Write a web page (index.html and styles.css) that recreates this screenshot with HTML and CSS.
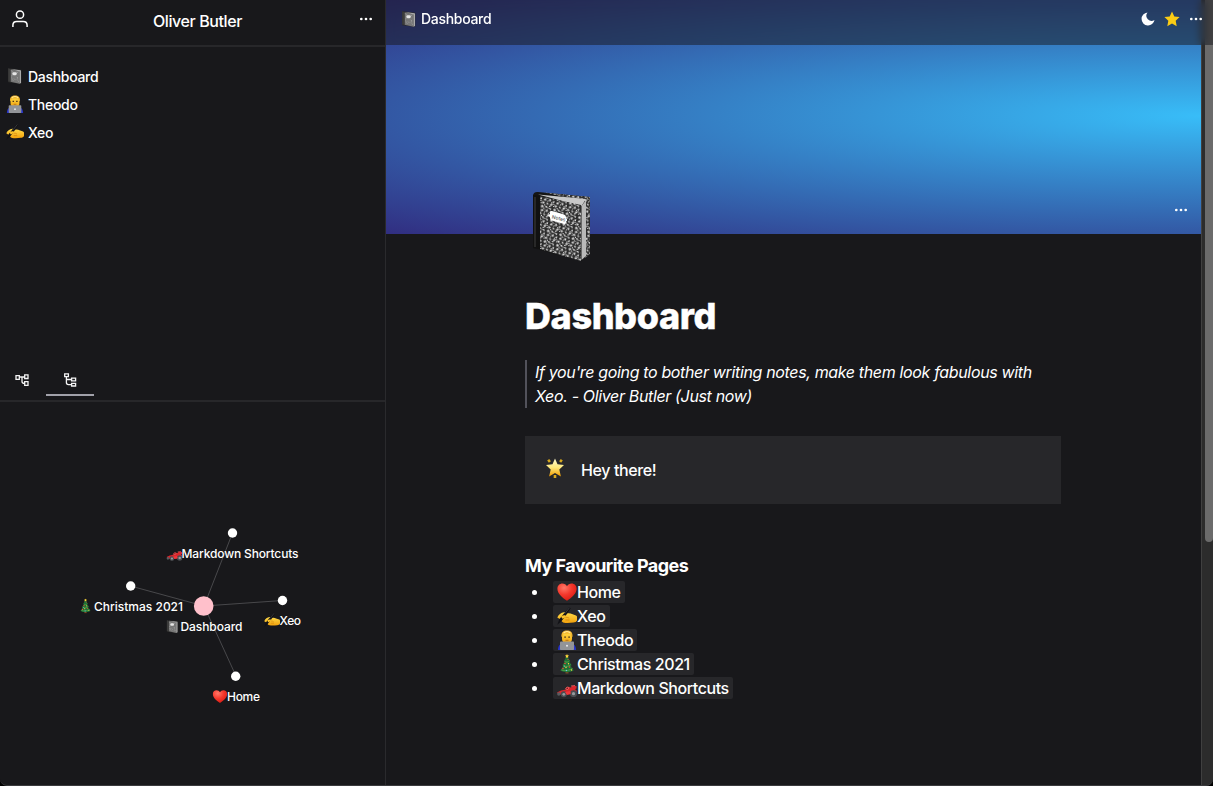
FILE: index.html
```html
<!DOCTYPE html>
<html lang="en">
<head>
<meta charset="utf-8">
<title>Dashboard</title>
<link rel="stylesheet" href="styles.css">
</head>
<body>
<svg class="defs" aria-hidden="true">
  <defs>
    <linearGradient id="gold" x1="0" y1="0" x2="0" y2="1"><stop offset="0" stop-color="#ffdc4a"/><stop offset="1" stop-color="#f2a10c"/></linearGradient>
    <linearGradient id="shine" x1="0" y1="0" x2="0" y2="1"><stop offset="0" stop-color="#fffbd0"/><stop offset=".5" stop-color="#ffe97a"/><stop offset="1" stop-color="#f09c00"/></linearGradient>
    <radialGradient id="red" cx=".35" cy=".25" r=".8"><stop offset="0" stop-color="#ff7868"/><stop offset=".5" stop-color="#f4382c"/><stop offset="1" stop-color="#d81912"/></radialGradient>
    <pattern id="marble" width="13" height="11" patternUnits="userSpaceOnUse" patternTransform="rotate(17)">
      <rect width="13" height="11" fill="#2c2c2c"/>
      <path d="M0 1l2-1 1 2-2 1zM4 0h2l1 2-2-.5zM9 1l2 .5v1.500l-2-1zM2 4l2 1-1 1.500-2-.5zM6 4l1.500-1 1 2-1.500 1zM10 5l2-1v2l-1 .5zM0 8l2-.5 1 1.500-2 1zM4.500 7.500l2 .5v2l-1.500-1zM8.500 8l2-1 .5 2-2 1zM12 9h1v1h-1z" fill="#dcdcdc"/>
      <path d="M3 2.500h1v1H3zM7.500 1h1v1h-1zM5 5.500h1v1H5zM9 6h.8v1H9zM11.500 7h1v1h-1zM3 10h1v1H3zM8 10l1.500.2v.8H8zM4 3.500l1-.5.5 1z" fill="#f2f2f2"/>
    </pattern>
    <symbol id="notebook" viewBox="0 0 20 20">
      <path d="M2.500 1.500L17 3v15l-1.500.5L2.500 17z" fill="#2b2b2b"/>
      <path d="M5 2.800L15 4.500v14L5 16.300z" fill="#777"/>
      <path d="M5 2.300l11.500 1.400L15 5z" fill="#aaa"/>
      <path d="M15 4.500l1.700-.8v14l-1.700.8z" fill="#aaa"/>
      <path d="M2.500 1.500l2.500 1v13.800L2.500 16z" fill="#3c3c3c"/>
      <path d="M6 4l1 1M12 5.500l1 1M6 12l1 1M9 13l1 1M12 11l1 1M7 14l1 1M13 15l1 1M6 10l1-.5M12 13.500l1-.5" stroke="#b5b5b5" stroke-width=".8"/>
      <rect x="7" y="5.800" width="5" height="3.300" rx="1.500" fill="#e6e6e6"/>
    </symbol>
    <symbol id="coder" viewBox="0 0 20 20">
      <path d="M1 20c0-5 3-7 6-7h6c3 0 6 2 6 7z" fill="#2834c8"/>
      <path d="M8 11h4v4H8z" fill="#e39b12"/>
      <rect x="5" y="2" width="10" height="11.500" rx="4.500" fill="url(#gold)"/>
      <path d="M4.500 7C4 2 6.500 .5 10 .5s6 1.500 5.500 6.500C14 6.500 14 4 13 3.800H7C6 4 6 6.500 4.500 7z" fill="#f3b62c"/>
      <path d="M6.500 3.200c2-2 5-2 7 0" fill="none" stroke="#ffe89a" stroke-width="1.200"/>
      <path d="M7.300 6.500h1.600v1.200H7.300zM11.300 6.500h1.600v1.200h-1.600z" fill="#4b3418"/>
      <path d="M8.500 10.300h3" stroke="#a75b12" stroke-width=".8"/>
      <rect x="3" y="11.500" width="14" height="8.500" rx=".8" fill="#929498"/>
      <circle cx="10" cy="15.700" r="1" fill="#eee"/>
    </symbol>
    <symbol id="writing" viewBox="0 0 20 20">
      <path d="M.300 11.500C1.500 8.500 4 6.800 7 6.300c1.500-.2 2.200.5 2.700 1.200 2-.7 4-.2 5.300.5l4 1.500c1 .5 1.300 1.500 1.300 3.500s-1.500 3.300-3.800 3.500c-3 .5-7 .7-9.500.2-1-.2-2-.8-2.500-1.700l-1-1.500z" fill="url(#gold)"/>
      <path d="M8.500 11.500c1.500-.4 3 0 3.700 1M8.500 14h4" fill="none" stroke="#cf7b08" stroke-width=".7"/>
      <path d="M12.300 1L13.700 2.200 9 9.300 4.600 15 .3 18.700l2-5.500L7.300 7z" fill="#111115"/>
      <path d="M12.600 1.600L7.800 7.700" stroke="#55555a" stroke-width=".6"/>
      <path d="M4 10.500c1.500-1 3.200-1.500 4.500-1 .8.500.3 1.700-.7 2L5.300 12.800z" fill="#ffc52b"/>
    </symbol>
    <symbol id="heart" viewBox="0 0 20 20">
      <path d="M10 18.800C5 15.500.4 11.500.4 6.800.4 3.600 2.600 1.500 5.400 1.500c2 0 3.600 1 4.600 2.700 1-1.700 2.600-2.700 4.600-2.700 2.800 0 5 2.100 5 5.300 0 4.700-4.600 8.700-9.600 12z" fill="url(#red)"/>
    </symbol>
    <symbol id="tree" viewBox="0 0 20 20">
      <path d="M8.500 16h3v3.500h-3z" fill="#7b4a22"/>
      <path d="M10 1.500L13 7l-1 .3 2.700 4-1.200.5 3.200 4.700c-4.200 2.200-9.200 2.200-13.400 0l3.200-4.700-1.200-.5 2.700-4-1-.3z" fill="#1d7136"/>
      <path d="M7.500 7.500c2 1 3.500.8 5-.5M6 11.800c3 1.200 6 .5 7.500-1M4.500 16c4 1 8.500.5 11-1.500" fill="none" stroke="#59a848" stroke-width=".9"/>
      <path d="M10 0l.6 1.300 1.400.2-1 1 .2 1.500-1.200-.7-1.200.7.2-1.500-1-1 1.400-.2z" fill="#ffd83a"/>
      <g fill="#f04638"><circle cx="8" cy="9.500" r=".8"/><circle cx="12.500" cy="13" r=".8"/><circle cx="6" cy="14.500" r=".8"/><circle cx="11" cy="5.500" r=".6"/></g>
      <g fill="#ffd447"><circle cx="11.500" cy="9.800" r=".7"/><circle cx="9" cy="13.500" r=".7"/><circle cx="14.500" cy="16" r=".7"/></g>
      <g fill="#6fc3ec"><circle cx="9.500" cy="16.500" r=".7"/><circle cx="7.500" cy="12" r=".6"/></g>
    </symbol>
    <symbol id="car" viewBox="0 0 20 20">
      <path d="M0 14.500l4-2 5-1 2-2.500 3 .5 1-1.500h4.500v2.500L18 11l2 2-2 3.500H2z" fill="#d8262c"/>
      <path d="M8.500 11l1.500-2 2 .5-1 2zM14 8l4-.5" stroke="#fa6464" stroke-width=".8" fill="#791116"/>
      <circle cx="6.800" cy="16.300" r="3" fill="#4a4c50"/><circle cx="6.800" cy="16.300" r="1.400" fill="#96999d"/>
      <circle cx="16.500" cy="15.700" r="3.400" fill="#4a4c50"/><circle cx="16.500" cy="15.700" r="1.600" fill="#96999d"/>
      <circle cx="1.800" cy="16" r="1.700" fill="#5a5c60"/>
      <path d="M8 14l5-1 1 2.500-4 1.500z" fill="#f0363a"/>
    </symbol>
    <symbol id="dots" viewBox="0 0 14 4"><circle cx="2.300" cy="2" r="1.350"/><circle cx="7" cy="2" r="1.350"/><circle cx="11.700" cy="2" r="1.350"/></symbol>
  </defs>
</svg>

<div class="app">
  <aside class="sidebar">
    <header class="account">
      <svg class="user" viewBox="0 0 18 18"><circle cx="9" cy="4.700" r="3.600"/><path d="M1.900 17v-1.800c0-2.200 1.700-3.700 3.900-3.700h6.400c2.200 0 3.900 1.500 3.900 3.700V17"/></svg>
      <span class="name">Oliver Butler</span>
      <svg class="dots"><use href="#dots"/></svg>
    </header>
    <nav class="pages">
      <a class="page"><svg class="emoji"><use href="#notebook"/></svg><span>Dashboard</span></a>
      <a class="page"><svg class="emoji"><use href="#coder"/></svg><span>Theodo</span></a>
      <a class="page"><svg class="emoji"><use href="#writing"/></svg><span>Xeo</span></a>
    </nav>
    <div class="tabs">
      <div class="tab"><svg class="tree-icon" viewBox="0 0 14 14"><path d="M1 2.600h3.300v3.800H1zM9.700 1.800H13v3.700H9.700zM9.700 8.700H13v3.600H9.700zM4.300 4h5.400M7 4v4.500q0 2 2.700 2"/></svg></div>
      <div class="tab active"><svg class="tree-icon" viewBox="0 0 14 14"><path d="M1.700.9h3.700v2.700H1.700zM8.600 5.200h4v2.700h-4zM8.600 10.300h4V13h-4zM3.400 3.600v6q0 2 2 2h3.200M3.400 6.500h5.200"/></svg></div>
    </div>
    <svg class="graph" viewBox="0 402 385 384">
      <g class="edges"><path d="M204 606L232.500 533M204 606L130.500 586M204 606L282.500 600.500M204 606L236 676"/></g>
      <circle cx="203.700" cy="606" r="9.800" class="hub"/>
      <g class="nodes"><circle cx="232.500" cy="533" r="4.700"/><circle cx="130.700" cy="586" r="4.700"/><circle cx="282.500" cy="600.500" r="4.700"/><circle cx="235.700" cy="676.200" r="4.700"/></g>
      <use href="#car" x="166.500" y="545.500" width="16" height="16"/>
      <text x="181.500" y="558" textLength="117">Markdown Shortcuts</text>
      <use href="#tree" x="78" y="598.500" width="15" height="15"/>
      <text x="94" y="611" textLength="89">Christmas 2021</text>
      <use href="#notebook" x="165" y="619" width="15" height="15"/>
      <text x="180.500" y="631" textLength="62">Dashboard</text>
      <use href="#writing" x="264" y="612" width="16" height="16"/>
      <text x="279.500" y="625" textLength="21.500">Xeo</text>
      <use href="#heart" x="212.500" y="689" width="15" height="15"/>
      <text x="227" y="701" textLength="33">Home</text>
    </svg>
  </aside>

  <main class="main">
    <div class="scroller">
      <div class="doc">
        <div class="cover"><svg class="dots"><use href="#dots"/></svg></div>
        <article class="content">
          <svg class="book" viewBox="0 0 60 72">
            <path d="M1 5Q2 1.500 6 2l52 5v57l-9 7L1 58z" fill="#151515"/>
            <path d="M12 2.500l46 4.500v57l-5 4V11z" fill="url(#marble)"/>
            <path d="M6 4.500l48 4.500-4.500 7z" fill="#c9c9c9"/>
            <path d="M49.500 16l4.500-6v56l-4.500 4z" fill="#b9b9b9"/>
            <path d="M8 6l41 9v56L8 59z" fill="url(#marble)"/>
            <path d="M1 5l7 1v53l-7-1z" fill="#111"/><path d="M3 7v50" stroke="#555" stroke-width=".7"/>
            <path d="M18 22q0-1.500 2-1l12 3.500q2 .5 2 2.500v1.500l1 .5v2l-1 .5v1q0 2-2 1.500l-12-3.500q-2-.5-2-2.500V27l-1.500-.7v-2l1.500.3z" fill="#fff"/>
            <text x="19.500" y="28.500" font-size="5" fill="#555" transform="rotate(13 19.500 28.500)">Notes</text>
          </svg>
          <h1>Dashboard</h1>
          <blockquote>If you're going to bother writing notes, make them look fabulous with<br>Xeo. - Oliver Butler (Just now)</blockquote>
          <div class="callout">
            <svg class="star-emoji" viewBox="0 0 20 20"><path d="M3.200 1.800l1.700 2.200M16.800 1.800l-1.700 2.200M10 17v3" stroke="#d8a91d" stroke-width="2.600"/><path d="M10 .5l2.500 5.800 6.500.7-4.700 4.400 1.600 7L10 15l-5.900 3.400 1.600-7L1 7l6.500-.7z" fill="url(#shine)"/></svg>
            <span>Hey there!</span>
          </div>
          <h2>My Favourite Pages</h2>
          <ul>
            <li><a class="chip"><svg class="em"><use href="#heart"/></svg>Home</a></li>
            <li><a class="chip"><svg class="em"><use href="#writing"/></svg>Xeo</a></li>
            <li><a class="chip"><svg class="em"><use href="#coder"/></svg>Theodo</a></li>
            <li><a class="chip"><svg class="em"><use href="#tree"/></svg>Christmas 2021</a></li>
            <li><a class="chip"><svg class="em"><use href="#car"/></svg>Markdown Shortcuts</a></li>
          </ul>
        </article>
      </div>
      <div class="track"><div class="thumb"></div></div>
    </div>
    <header class="topbar">
      <svg class="emoji"><use href="#notebook"/></svg><span class="title">Dashboard</span>
      <svg class="moon" viewBox="0 0 14 14"><path d="M6.500.5A6.500 6.500 0 1 0 13.500 8 5.200 5.200 0 0 1 6.500.5z"/></svg>
      <svg class="star" viewBox="0 0 16 16"><path d="M8 .5l2.300 4.900 5.300.7-3.900 3.700 1 5.400L8 12.600l-4.700 2.600 1-5.400L.4 6.100l5.300-.7z"/></svg>
      <svg class="dots"><use href="#dots"/></svg>
    </header>
  </main>
</div>
</body>
</html>
```
FILE: styles.css
```css
* { box-sizing: border-box; }
body { margin: 0; background: #000; color: #fff; font-family: Inter, "Liberation Sans", sans-serif; font-weight: 450; overflow: hidden; }
svg { display: block; flex: none; }
.defs { position: absolute; width: 0; height: 0; }
.app { position: relative; display: flex; width: 1213px; height: 786px; background: #18181b; border-radius: 0 0 7px 7px; overflow: hidden; }
.app::after { content: ""; position: absolute; inset: 0; border-bottom: 1px solid #3a3a3d; border-radius: 0 0 7px 7px; pointer-events: none; }

.sidebar { display: flex; flex-direction: column; width: 386px; border-right: 1px solid #2a2a2d; }
.account { display: flex; justify-content: space-between; height: 47px; padding: 10px 12px 0 11px; border-bottom: 2px solid #27272a; }
.user { width: 18px; height: 18px; fill: none; stroke: #fff; stroke-width: 1.5; }
.name { margin-left: 7px; font-size: 16px; line-height: 22px; letter-spacing: -0.4px; }
.dots { width: 14px; height: 4px; fill: #fff; }
.account .dots { margin-top: 7px; }
.pages { display: flex; flex-direction: column; flex: 1; padding: 15px 6px 0; }
.page { display: flex; align-items: center; gap: 4px; height: 28px; font-size: 14px; letter-spacing: -0.3px; }
.emoji { width: 18px; height: 18px; }
.tabs { display: flex; height: 38px; padding: 0 0 4px; gap: 2px; border-bottom: 2px solid #27272a; }
.tab { display: flex; justify-content: center; width: 44px; padding-top: 9px; }
.tab.active { width: 48px; border-bottom: 2px solid #a1a1aa; }
.tree-icon { width: 14px; height: 14px; fill: none; stroke: #f4f4f5; stroke-width: 1.3; }
.graph { width: 385px; height: 384px; font-size: 12px; }
.graph text { fill: #fff; }
.edges { stroke: #48484b; fill: none; }
.hub { fill: #ffc0cb; }
.nodes { fill: #fff; }

.main { position: relative; flex: 1; }
.scroller { display: flex; height: 786px; }
.doc { flex: 1; }
.cover { display: flex; justify-content: flex-end; align-items: flex-end; height: 234px; padding: 0 13px 22px; background: radial-gradient(ellipse at 100% 49.500%, #38bdf8, #312e81); }
.content { width: 536px; margin: -44px 0 0 139px; }
.book { position: relative; width: 60px; height: 72px; margin-left: 7px; }
h1 { margin: 34px 0 24px; font-size: 36px; line-height: 40px; font-weight: 800; letter-spacing: -0.4px; -webkit-text-stroke: 0.4px #fff; }
blockquote { margin: 0 0 28px; padding-left: 8px; border-left: 2px solid #52525b; font-size: 16px; line-height: 24px; font-style: italic; letter-spacing: -0.35px; white-space: nowrap; }
.callout { display: flex; align-items: center; gap: 16px; height: 68px; padding: 0 20px; background: #27272a; font-size: 16px; letter-spacing: -0.4px; }
.star-emoji { width: 20px; height: 20px; margin-top: -4px; }
h2 { margin: 50px 0 2px; font-size: 18px; line-height: 24px; font-weight: 650; letter-spacing: -0.54px; }
ul { margin: 0; padding: 0; list-style: none; font-size: 16px; line-height: 24px; letter-spacing: -0.42px; }
li { display: flex; align-items: center; height: 24px; padding-left: 7px; }
li::before { content: ""; width: 5px; height: 5px; margin-right: 16px; border-radius: 50%; background: #fff; }
.chip { display: inline-flex; align-items: center; height: 22px; padding: 0 4px; border-radius: 2px; background: #27272a; }
.em { width: 20px; height: 20px; }
.track { display: flex; justify-content: flex-end; width: 12px; background: #2c2c2c; border-left: 1px solid #404040; }
.thumb { width: 8px; height: 542px; background: #6b6b6b; border-radius: 0 0 4px 4px; }

.topbar { position: absolute; inset: 0 0 auto 0; display: flex; align-items: center; height: 45px; padding: 0 10px 7px 14px; background: rgba(24, 24, 27, 0.5); backdrop-filter: blur(4px); font-size: 14px; letter-spacing: -0.3px; }
.title { flex: 1; margin: -1px 0 0 3px; }
.moon { width: 14px; height: 14px; fill: #fff; margin-right: 9px; }
.star { width: 16px; height: 16px; fill: #facc15; margin-right: 9px; }
```
